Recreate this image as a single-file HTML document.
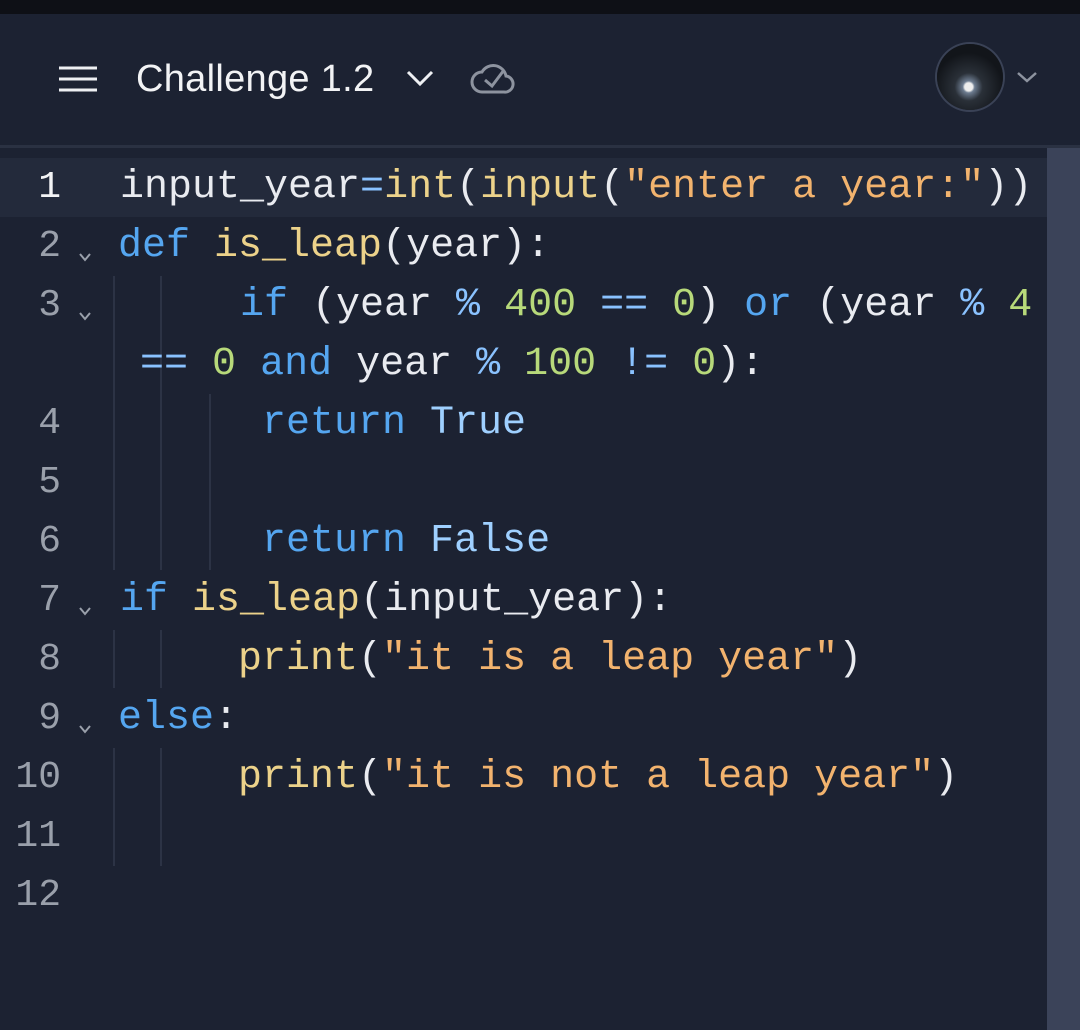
<!DOCTYPE html>
<html><head><meta charset="utf-8"><style>
body{margin:0;width:1080px;height:1030px;background:#1c2232;overflow:hidden;position:relative;font-family:"Liberation Mono",monospace}
.top{position:absolute;left:0;top:0;width:1080px;height:14px;background:#0e1016}
.hdr{position:absolute;left:0;top:14px;width:1080px;height:131px;background:#1c2232}
.bd{position:absolute;left:0;top:145px;width:1080px;height:3px;background:#2a3142}
.title{position:absolute;left:136px;top:55px;font-family:"Liberation Sans",sans-serif;font-size:38px;letter-spacing:0.3px;color:#f2f3f5;line-height:48px}
.sb{position:absolute;left:1047px;top:148px;width:33px;height:882px;background:#3b4359}
.hl{position:absolute;left:0;top:158px;width:1047px;height:59px;background:#232a3b}
.r{position:absolute;height:59px;line-height:59px;font-size:40px;white-space:pre;color:#e9ebf0}
.n{position:absolute;width:61px;left:0;text-align:right;height:59px;line-height:59px;font-size:38px;color:#9aa0ab}
.ch{position:absolute;left:78px;width:14px;height:14px}
.g{position:absolute;width:2px;background:#2c3345}
.k{color:#55a6f0}.f{color:#ecd28a}.s{color:#f2b36e}.m{color:#b7d97a}.o{color:#8ac2ff}.t{color:#9fd0ff}
</style></head><body>
<div class="top"></div><div class="hdr"></div><div class="bd"></div>
<svg style="position:absolute;left:56px;top:64px" width="44" height="30"><path d="M3 4H41M3 15H41M3 26H41" stroke="#eef0f3" stroke-width="3"/></svg>
<div class="title">Challenge 1.2</div>
<svg style="position:absolute;left:405px;top:68px" width="30" height="20"><path d="M3 4L15 16L27 4" stroke="#eef0f3" stroke-width="3" fill="none"/></svg>
<svg style="position:absolute;left:470px;top:62px" width="46" height="34"><path d="M12 30H34a8 8 0 0 0 2-16a13 13 0 0 0-24-4a10 10 0 0 0 0 20z" stroke="#8d939f" stroke-width="3" fill="none"/><path d="M15 18L22 24L34 8" stroke="#8d939f" stroke-width="3" fill="none"/></svg>
<div style="position:absolute;left:937px;top:44px;width:66px;height:66px;border-radius:50%;background:radial-gradient(circle at 48% 65%,#eee 0 4px,#6d7c90 6px,#2a3038 14px,#12151a 34px);box-shadow:0 0 0 2px #3a4256"></div>
<svg style="position:absolute;left:1015px;top:70px" width="24" height="14"><path d="M3 3L12 11L21 3" stroke="#8d939f" stroke-width="2.5" fill="none"/></svg>
<div class="sb"></div><div class="hl"></div>
<div class="g" style="left:113px;top:276px;height:590px"></div>
<div class="g" style="left:160px;top:276px;height:118px"></div>
<div class="g" style="left:160px;top:394px;height:176px;left:160px"></div>
<div class="g" style="left:209px;top:394px;height:176px"></div>
<div class="g" style="left:160px;top:630px;height:58px"></div>
<div class="g" style="left:160px;top:748px;height:118px"></div>
<div style="position:absolute;left:100px;top:570px;width:20px;height:60px;background:#1c2232"></div>
<div style="position:absolute;left:100px;top:688px;width:20px;height:60px;background:#1c2232"></div>
<div class="n" style="top:158px;color:#f2f3f5">1</div>
<div class="n" style="top:217px">2</div><div class="n" style="top:276px">3</div>
<div class="n" style="top:394px">4</div><div class="n" style="top:453px">5</div>
<div class="n" style="top:512px">6</div><div class="n" style="top:571px">7</div>
<div class="n" style="top:630px">8</div><div class="n" style="top:689px">9</div>
<div class="n" style="top:748px">10</div><div class="n" style="top:807px">11</div>
<div class="n" style="top:866px">12</div>
<svg class="ch" style="top:250px" viewBox="0 0 14 14"><path d="M2 4L7 10L12 4" stroke="#9aa0ab" stroke-width="2" fill="none"/></svg>
<svg class="ch" style="top:309px" viewBox="0 0 14 14"><path d="M2 4L7 10L12 4" stroke="#9aa0ab" stroke-width="2" fill="none"/></svg>
<svg class="ch" style="top:604px" viewBox="0 0 14 14"><path d="M2 4L7 10L12 4" stroke="#9aa0ab" stroke-width="2" fill="none"/></svg>
<svg class="ch" style="top:722px" viewBox="0 0 14 14"><path d="M2 4L7 10L12 4" stroke="#9aa0ab" stroke-width="2" fill="none"/></svg>
<div class="r" style="left:120px;top:158px">input_year<span class="o">=</span><span class="f">int</span>(<span class="f">input</span>(<span class="s">"enter a year:"</span>))</div>
<div class="r" style="left:118px;top:217px"><span class="k">def</span> <span class="f">is_leap</span>(year):</div>
<div class="r" style="left:240px;top:276px"><span class="k">if</span> (year <span class="o">%</span> <span class="m">400</span> <span class="o">==</span> <span class="m">0</span>) <span class="k">or</span> (year <span class="o">%</span> <span class="m">4</span></div>
<div class="r" style="left:140px;top:335px"><span class="o">==</span> <span class="m">0</span> <span class="k">and</span> year <span class="o">%</span> <span class="m">100</span> <span class="o">!=</span> <span class="m">0</span>):</div>
<div class="r" style="left:262px;top:394px"><span class="k">return</span> <span class="t">True</span></div>
<div class="r" style="left:262px;top:512px"><span class="k">return</span> <span class="t">False</span></div>
<div class="r" style="left:120px;top:571px"><span class="k">if</span> <span class="f">is_leap</span>(input_year):</div>
<div class="r" style="left:238px;top:630px"><span class="f">print</span>(<span class="s">"it is a leap year"</span>)</div>
<div class="r" style="left:118px;top:689px"><span class="k">else</span>:</div>
<div class="r" style="left:238px;top:748px"><span class="f">print</span>(<span class="s">"it is not a leap year"</span>)</div>
</body></html>
